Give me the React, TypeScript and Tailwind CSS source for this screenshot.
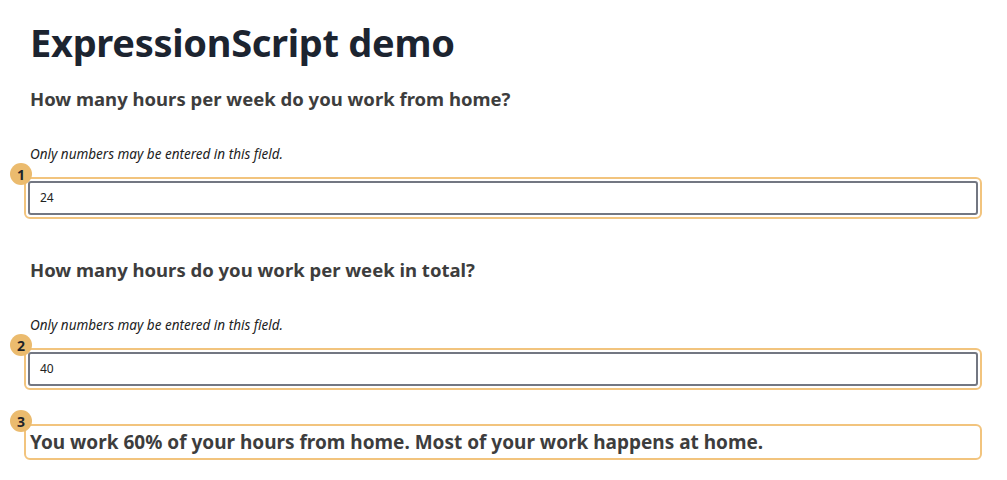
import React from 'react'

function Badge({ n }: { n: number }) {
  return (
    <div className="absolute -left-[16px] -top-[16px] flex h-[22px] w-[22px] items-center justify-center rounded-full bg-[#ebbb6e] text-[14px] font-bold text-[#1f2328]">
      {n}
    </div>
  )
}

function NumberQuestion({ n, title, value }: { n: number; title: string; value: string }) {
  return (
    <div>
      <h2 className="text-[18.5px] font-bold leading-[24px] text-[#3d3d3d]">{title}</h2>
      <p className="mt-[34px] text-[13.5px] italic leading-[18px] text-[#222]">Only numbers may be entered in this field.</p>
      <div className="relative mt-[14px] -ml-[6px] rounded-[6px] border-2 border-[#f2c47e] p-[2px]">
        <Badge n={n} />
        <div className="flex h-[34px] items-center rounded-[3px] border-2 border-[#737782] bg-white px-[10px] text-[12px] text-[#222]">
          {value}
        </div>
      </div>
    </div>
  )
}

export default function App() {
  return (
    <div className="min-h-[480px] bg-white pl-[30px] pr-[25px] pt-[18px] font-['Noto_Sans',sans-serif]">
      <h1 className="text-[38px] font-bold leading-[48px] tracking-[-0.3px] text-[#1c2430]">ExpressionScript demo</h1>
      <div className="mt-[21px]">
        <NumberQuestion n={1} title="How many hours per week do you work from home?" value="24" />
      </div>
      <div className="mt-[39px]">
        <NumberQuestion n={2} title="How many hours do you work per week in total?" value="40" />
      </div>
      <div className="relative mt-[34px] -ml-[6px] rounded-[6px] border-2 border-[#f2c47e] px-[4px] py-[2px]">
        <Badge n={3} />
        <p className="text-[19px] font-bold leading-[28px] text-[#3d3d3d]">
          You work 60% of your hours from home. Most of your work happens at home.
        </p>
      </div>
    </div>
  )
}
